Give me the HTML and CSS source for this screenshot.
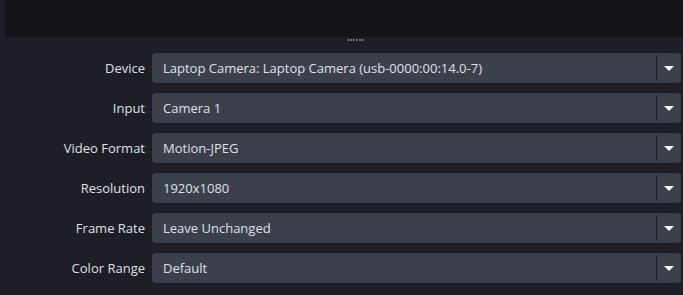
FILE: index.html
```html
<!DOCTYPE html>
<html>
<head>
<meta charset="utf-8">
<link rel="stylesheet" href="styles.css">
</head>
<body>
<div class="app">
  <div class="preview"></div>
  <div class="splitter"><span class="dots"><i></i><i></i><i></i><i></i><i></i><i></i></span></div>
  <div class="form">
    <div class="row"><label class="lbl">Device</label><div class="combo"><span class="val">Laptop Camera: Laptop Camera (usb-0000:00:14.0-7)</span><span class="btn"><span class="arrow"></span></span></div></div>
    <div class="row"><label class="lbl">Input</label><div class="combo"><span class="val">Camera 1</span><span class="btn"><span class="arrow"></span></span></div></div>
    <div class="row"><label class="lbl">Video Format</label><div class="combo"><span class="val">Motion-JPEG</span><span class="btn"><span class="arrow"></span></span></div></div>
    <div class="row"><label class="lbl">Resolution</label><div class="combo"><span class="val">1920x1080</span><span class="btn"><span class="arrow"></span></span></div></div>
    <div class="row"><label class="lbl">Frame Rate</label><div class="combo"><span class="val">Leave Unchanged</span><span class="btn"><span class="arrow"></span></span></div></div>
    <div class="row"><label class="lbl">Color Range</label><div class="combo"><span class="val">Default</span><span class="btn"><span class="arrow"></span></span></div></div>
  </div>
</div>
</body>
</html>
```
FILE: styles.css
```css
html, body {
  margin: 0;
  padding: 0;
  background: #1e1f26;
}
body {
  width: 683px;
  height: 295px;
  overflow: hidden;
  font-family: "Open Sans", "Noto Sans", sans-serif;
  font-size: 13px;
  color: #dfe0e3;
}
.app {
  display: flex;
  flex-direction: column;
}
.preview {
  margin-left: 5px;
  height: 37px;
  background: #141519;
}
.splitter {
  height: 6px;
  display: flex;
  justify-content: center;
  padding-top: 2px;
  box-sizing: border-box;
}
.dots {
  display: flex;
  gap: 1px;
  margin-left: 28px;
  height: 2px;
}
.dots i {
  width: 2px;
  height: 2px;
  background: #6c6e76;
}
.form {
  display: flex;
  flex-direction: column;
  gap: 10px;
  padding-top: 10px;
}
.row {
  display: flex;
  align-items: center;
  height: 30px;
}
.lbl {
  width: 145px;
  text-align: right;
  padding-right: 7px;
  box-sizing: content-box;
}
.combo {
  width: 529px;
  height: 30px;
  background: #3c404b;
  border-radius: 4px;
  display: flex;
  align-items: center;
}
.val {
  flex: 1;
  padding-left: 11px;
}
.btn {
  width: 24px;
  height: 26px;
  border-left: 1px solid #1f2128;
  display: flex;
  align-items: center;
  justify-content: center;
}
.arrow {
  width: 0;
  height: 0;
  border-left: 5px solid transparent;
  border-right: 5px solid transparent;
  border-top: 5px solid #ffffff;
  margin-top: 1px;
}
```
